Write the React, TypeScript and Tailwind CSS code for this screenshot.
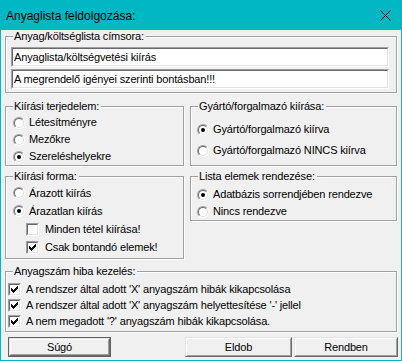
import React from "react";

function Group({
  label,
  className,
  children,
}: {
  label: string;
  className: string;
  children?: React.ReactNode;
}) {
  return (
    <div
      className={`border border-[#a0a0a0] shadow-[inset_1px_1px_0_#ffffff,1px_1px_0_#ffffff] flex flex-col ${className}`}
    >
      <div className="-mt-[7px] ml-[7px] w-fit bg-[#f0f0f0] pl-[1px] pr-[2px] h-[13px] leading-[13px] whitespace-nowrap">
        {label}
      </div>
      {children}
    </div>
  );
}

function Radio({ checked }: { checked?: boolean }) {
  return (
    <span className="w-[12px] h-[12px] rounded-full border border-t-[#a0a0a0] border-l-[#a0a0a0] border-b-white border-r-white shrink-0 box-border">
      <span className="flex w-full h-full rounded-full border border-t-[#696969] border-l-[#696969] border-b-[#e3e3e3] border-r-[#e3e3e3] bg-white items-center justify-center box-border">
        {checked && <span className="w-[4px] h-[4px] rounded-full bg-black" />}
      </span>
    </span>
  );
}

const CHECK: [number, number][] = [
  [6, 0],
  [5, 1], [6, 1],
  [0, 2], [4, 2], [5, 2], [6, 2],
  [0, 3], [1, 3], [3, 3], [4, 3], [5, 3],
  [0, 4], [1, 4], [2, 4], [3, 4], [4, 4],
  [1, 5], [2, 5], [3, 5],
  [2, 6],
];

function Check({ checked }: { checked?: boolean }) {
  return (
    <span className="w-[13px] h-[13px] border border-t-[#a0a0a0] border-l-[#a0a0a0] border-b-white border-r-white shrink-0 box-border">
      <span className="flex w-full h-full border border-t-[#696969] border-l-[#696969] border-b-[#e3e3e3] border-r-[#e3e3e3] bg-white items-center justify-center box-border">
        {checked && (
          <svg width="7" height="7" viewBox="0 0 7 7" shapeRendering="crispEdges">
            {CHECK.map(([x, y], i) => (
              <rect key={i} x={x} y={y} width="1" height="1" fill="#000" />
            ))}
          </svg>
        )}
      </span>
    </span>
  );
}

function RadioRow({ label, checked, h }: { label: string; checked?: boolean; h: string }) {
  return (
    <div className={`flex items-center ${h}`}>
      <Radio checked={checked} />
      <span className="ml-[4px] whitespace-nowrap">{label}</span>
    </div>
  );
}

function CheckRow({ label, checked, h, gap }: { label: string; checked?: boolean; h: string; gap: string }) {
  return (
    <div className={`flex items-center ${h}`}>
      <Check checked={checked} />
      <span className={`${gap} whitespace-nowrap`}>{label}</span>
    </div>
  );
}

function Field({ value }: { value: string }) {
  return (
    <div className="h-[20px] border border-t-[#a0a0a0] border-l-[#a0a0a0] border-b-white border-r-white">
      <div className="h-full border border-t-[#696969] border-l-[#696969] border-b-[#e3e3e3] border-r-[#e3e3e3] bg-white flex items-center pl-[1px] whitespace-nowrap">
        {value}
      </div>
    </div>
  );
}

function Button({ label, w, def }: { label: string; w: string; def?: boolean }) {
  const inner = (
    <div className="h-full border border-t-[#e3e3e3] border-l-[#e3e3e3] border-b-[#696969] border-r-[#696969]">
      <div className="h-full border border-t-white border-l-white border-b-[#a0a0a0] border-r-[#a0a0a0] bg-[#f0f0f0] flex items-center justify-center">
        {label}
      </div>
    </div>
  );
  if (def) {
    return <div className={`${w} h-[20px] border border-[#646464]`}>{inner}</div>;
  }
  return <div className={`${w} h-[20px]`}>{inner}</div>;
}

export default function App() {
  return (
    <div className="w-[402px] h-[361px] bg-[#f0f0f0] border border-[#00b7c3] flex flex-col text-[11px] tracking-[-0.15px] text-black font-['Liberation_Sans',Arial,sans-serif]">
      <div className="h-[29px] shrink-0 bg-[#00b7c3] flex items-center">
        <span className="ml-[5px] text-[12px] tracking-normal font-['Liberation_Sans',sans-serif] leading-none">
          Anyaglista feldolgozása:
        </span>
        <svg className="ml-auto mr-[10px]" width="11" height="11" viewBox="0 0 11 11">
          <path d="M0.5 0.5 L10.5 10.5 M10.5 0.5 L0.5 10.5" stroke="#000" strokeWidth="1" />
        </svg>
      </div>
      <div className="flex flex-col px-[4px]">
        <Group label="Anyag/költséglista címsora:" className="mt-[6px] h-[57px]">
          <div className="flex flex-col gap-[2px] pt-[4px] pl-[5px] pr-[7px]">
            <Field value="Anyaglista/költségvetési kiírás" />
            <Field value="A megrendelő igényei szerinti bontásban!!!" />
          </div>
        </Group>
        <div className="flex mt-[13px] gap-[6px]">
          <Group label="Kiírási terjedelem:" className="w-[179px] h-[60px]">
            <div className="flex flex-col pt-[1px] pl-[7px]">
              <RadioRow label="Létesítményre" h="h-[17px]" />
              <RadioRow label="Mezőkre" h="h-[17px]" />
              <RadioRow label="Szereléshelyekre" checked h="h-[17px]" />
            </div>
          </Group>
          <Group label="Gyártó/forgalmazó kiírása:" className="w-[207px] h-[60px]">
            <div className="flex flex-col pt-[6px] pl-[6px]">
              <RadioRow label="Gyártó/forgalmazó kiírva" checked h="h-[21px]" />
              <RadioRow label="Gyártó/forgalmazó NINCS kiírva" h="h-[21px]" />
            </div>
          </Group>
        </div>
        <div className="flex items-start mt-[10px] gap-[6px]">
          <Group label="Kiírási forma:" className="w-[179px] h-[83px]">
            <div className="flex flex-col pt-[1px] pl-[7px]">
              <RadioRow label="Árazott kiírás" h="h-[18px]" />
              <RadioRow label="Árazatlan kiírás" checked h="h-[18px]" />
              <div className="pl-[13px]">
                <CheckRow label="Minden tétel kiírása!" h="h-[18px]" gap="ml-[6px]" />
                <CheckRow label="Csak bontandó elemek!" checked h="h-[18px]" gap="ml-[6px]" />
              </div>
            </div>
          </Group>
          <Group label="Lista elemek rendezése:" className="w-[207px] h-[45px]">
            <div className="flex flex-col pt-[3px] pl-[6px]">
              <RadioRow label="Adatbázis sorrendjében rendezve" checked h="h-[17px]" />
              <RadioRow label="Nincs rendezve" h="h-[17px]" />
            </div>
          </Group>
        </div>
        <Group label="Anyagszám hiba kezelés:" className="mt-[12px] h-[61px]">
          <div className="flex flex-col pt-[3px] pl-[2px]">
            <CheckRow label="A rendszer által adott 'X' anyagszám hibák kikapcsolása" checked h="h-[16px]" gap="ml-[5px]" />
            <CheckRow label="A rendszer által adott 'X' anyagszám helyettesítése '-' jellel" checked h="h-[16px]" gap="ml-[5px]" />
            <CheckRow label="A nem megadott '?' anyagszám hibák kikapcsolása." checked h="h-[16px]" gap="ml-[5px]" />
          </div>
        </Group>
        <div className="flex mt-[5px] ml-[3px] -mr-[1px]">
          <Button label="Súgó" w="w-[103px]" def />
          <div className="ml-auto flex gap-[2px]">
            <Button label="Eldob" w="w-[107px]" />
            <Button label="Rendben" w="w-[104px]" />
          </div>
        </div>
      </div>
    </div>
  );
}
